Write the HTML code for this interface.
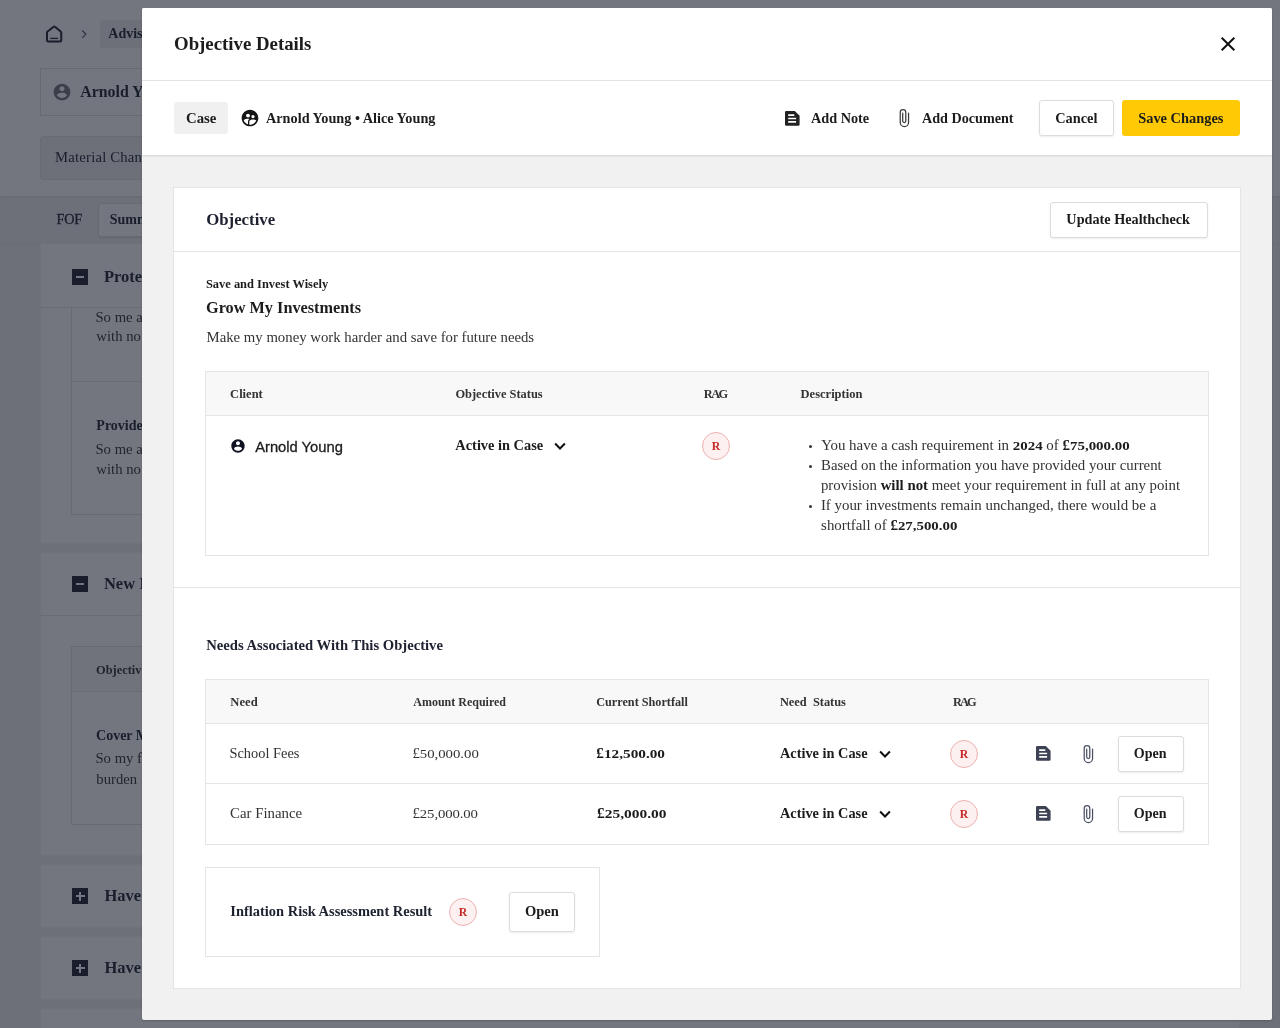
<!DOCTYPE html>
<html>
<head>
<meta charset="utf-8">
<title>Objective Details</title>
<style>
*{box-sizing:border-box;margin:0;padding:0}
html,body{width:1280px;height:1028px;overflow:hidden;background:#fff}
body{position:relative;font-family:"Liberation Serif",serif;color:#1c1c1c;font-size:14px}
.abs{position:absolute}
.t{position:absolute;white-space:nowrap;line-height:20px;height:20px}
.b{font-weight:bold}
.os{display:inline-block;transform:scaleY(0.78);transform-origin:0 75%}
.sans{font-family:"Liberation Sans",sans-serif}

/* ---------- underlying page ---------- */
#page{position:absolute;left:0;top:0;width:1280px;height:1028px;overflow:hidden;color:#1e2230;will-change:transform}
#page .grey{position:absolute;background:#f0f0f0}
#page .card{position:absolute;background:#fff;border:1px solid #f6f6f6}
#page .box{position:absolute;border:1px solid #e2e2e2;background:#fff}
#page .ico{position:absolute;width:16px;height:16px;background:#1e2230}
#page .ico:before{content:"";position:absolute;left:4px;top:7px;width:8px;height:2px;background:#fff}
#page .ico.plus:before{left:3.5px;top:7.25px;width:9px;height:1.5px}
#page .ico.plus:after{content:"";position:absolute;left:7.25px;top:3.5px;width:1.5px;height:9px;background:#fff}
#overlay{position:absolute;left:0;top:0;width:1280px;height:1028px;background:rgba(22,27,42,0.6)}

/* ---------- modal ---------- */
#modal{position:absolute;left:142px;top:8px;width:1130px;height:1012px;background:#f1f1f1;border-radius:2px;box-shadow:0 1px 2px rgba(0,0,0,0.2);overflow:hidden}
.hr{position:absolute;height:1px;background:#e6e6e6}
.btn{position:absolute;background:#fff;border:1px solid #dcdcdc;border-radius:3px;box-shadow:0 1px 2px rgba(0,0,0,0.08)}
.tbl{position:absolute;border:1px solid #e5e5e5;background:#fff}
.rag{position:absolute;width:28px;height:28px;border-radius:50%;background:#fdf0f0;border:1px solid #efb1b1;color:#c62828;font-weight:bold;font-size:13.5px;line-height:26px;text-align:center}
.rag i{display:inline-block;font-style:normal;transform:scaleX(0.87)}
.h12{font-size:12px;font-weight:bold;color:#333}
</style>
</head>
<body>

<div id="page">
  <div class="grey" style="left:100px;top:20px;width:120px;height:28px;border-radius:3px"></div>
  <svg class="abs" style="left:44px;top:23px" width="22" height="22" viewBox="0 0 22 22"><path d="M3 9.6 Q3 8.9 3.6 8.45 L9.6 3.75 Q10.25 3.25 10.9 3.75 L16.65 8.45 Q17.25 8.9 17.25 9.6 V17 Q17.25 18.5 15.75 18.5 H4.5 Q3 18.5 3 17 Z" stroke="#1e2230" stroke-width="2" fill="none" stroke-linejoin="round"/><path d="M6.25 15.4 H14" stroke="#1e2230" stroke-width="1.3" fill="none"/></svg>
  <svg class="abs" style="left:80px;top:29px" width="8" height="10" viewBox="0 0 8 10"><path d="M2.2 1.4 L5.8 5.1 L2.2 8.8" stroke="#4a4e5c" stroke-width="1.2" fill="none"/></svg>
  <span class="t b" id="t_p_advis" style="left:108.32px;top:24.41px">Advisor</span>

  <div class="card" style="left:40px;top:68px;width:1200px;height:48px;border-color:#dedede"></div>
  <svg class="abs" style="left:52.2px;top:82.2px" width="20" height="20" viewBox="0 0 24 24"><path d="M12 2C6.48 2 2 6.48 2 12s4.48 10 10 10 10-4.48 10-10S17.52 2 12 2zm0 3c1.66 0 3 1.34 3 3s-1.34 3-3 3-3-1.34-3-3 1.34-3 3-3zm0 14.2c-2.5 0-4.71-1.28-6-3.22.03-1.99 4-3.08 6-3.08 1.99 0 5.97 1.09 6 3.08-1.29 1.94-3.5 3.22-6 3.22z" fill="#75757b"/></svg>
  <span class="t b" id="t_p_arnold" style="left:80.18px;top:82.3px;font-size:15.9px">Arnold Young</span>

  <div class="grey" style="left:40px;top:136px;width:200px;height:44px;border-radius:3px;border:1px solid #e4e4e4"></div>
  <span class="t" id="t_p_material" style="left:55.1px;top:146.8px;font-size:14.7px;letter-spacing:0.2px">Material Changes</span>

  <div class="grey" style="left:0;top:196px;width:1280px;height:832px;box-shadow:inset 0 2px 3px -1px rgba(0,0,0,0.08)"></div>
  <span class="t" id="t_p_fof" style="left:56.4px;top:208.8px;font-size:14.2px;letter-spacing:-0.1px;-webkit-text-stroke:0.3px #1e2230">FOF</span>
  <div class="box" style="left:98px;top:203px;width:120px;height:34px;border-radius:3px;box-shadow:0 1px 2px rgba(0,0,0,0.12)"></div>
  <span class="t b" id="t_p_summ" style="left:109.7px;top:209.71px">Summary</span>
  <div class="hr" style="left:0;top:244px;width:1280px;background:#e5e5e5"></div>

  <!-- card 1 -->
  <div class="card" style="left:40px;top:244px;width:1200px;height:300px;border-top:none"></div>
  <div class="hr" style="left:41px;top:307px;width:1198px;background:#e6e6e6"></div>
  <div class="ico" style="left:72px;top:269px"></div>
  <span class="t b" id="t_p_prote" style="left:103.94px;top:266.8px;font-size:16.5px">Protection</span>
  <div class="box" style="left:71px;top:300px;width:1138px;height:215px;border-top:none"></div>
  <div class="abs" style="left:60px;top:296px;width:1160px;height:12px;background:#fff"></div>
  <div class="hr" style="left:41px;top:307px;width:1198px;background:#e6e6e6"></div>
  <span class="t" id="t_p_so1" style="left:95.46px;top:306.5px;font-size:14.7px;color:#333">So me and my family</span>
  <span class="t" id="t_p_with1" style="left:96.36px;top:326.21px;font-size:14.7px;color:#333">with no worries</span>
  <div class="hr" style="left:72px;top:381px;width:1136px;background:#e5e5e5"></div>
  <span class="t b" id="t_p_provide" style="left:96.36px;top:415.71px">Provide for</span>
  <span class="t" id="t_p_so2" style="left:95.46px;top:438.71px;font-size:14.7px;color:#333">So me and my family</span>
  <span class="t" id="t_p_with2" style="left:96.36px;top:459px;font-size:14.7px;color:#333">with no worries</span>

  <!-- card 2 -->
  <div class="card" style="left:40px;top:552px;width:1200px;height:304px"></div>
  <div class="hr" style="left:41px;top:615px;width:1198px;background:#e6e6e6"></div>
  <div class="ico" style="left:72px;top:576px"></div>
  <span class="t b" id="t_p_new" style="left:103.94px;top:573.71px;font-size:16.5px">New Investment</span>
  <div class="box" style="left:71px;top:646px;width:1138px;height:179px"></div>
  <div class="abs" style="left:72px;top:647px;width:1136px;height:44px;background:#f8f8f8"></div>
  <div class="hr" style="left:72px;top:691px;width:1136px;background:#e5e5e5"></div>
  <span class="t h12" id="t_p_objectiv" style="left:96.06px;top:659.91px;font-size:12.4px">Objective</span>
  <span class="t b" id="t_p_cover" style="left:96.06px;top:725.5px">Cover My</span>
  <span class="t" id="t_p_somy" style="left:95.46px;top:748.41px;font-size:14.7px;color:#333">So my family</span>
  <span class="t" id="t_p_burden" style="left:96.36px;top:768.8px;font-size:14.7px;color:#333">burden</span>

  <!-- cards 3-5 -->
  <div class="card" style="left:40px;top:864px;width:1200px;height:64px"></div>
  <div class="ico plus" style="left:72px;top:888px"></div>
  <span class="t b" id="t_p_have1" style="left:104.54px;top:885.71px;font-size:16.5px">Have</span>
  <div class="card" style="left:40px;top:936px;width:1200px;height:64px"></div>
  <div class="ico plus" style="left:72px;top:960px"></div>
  <span class="t b" id="t_p_have2" style="left:104.54px;top:958px;font-size:16.5px">Have</span>
  <div class="card" style="left:40px;top:1008px;width:1200px;height:64px"></div>
</div>
<div id="overlay"></div>

<div id="modal">
<div id="mc" style="position:absolute;left:-142px;top:-8px;width:1280px;height:1028px;will-change:transform">
  <!-- header -->
  <div class="abs" style="left:142px;top:8px;width:1130px;height:72px;background:#fff"></div>
  <div class="hr" style="left:142px;top:80px;width:1130px"></div>
  <span class="t b" id="t_title" style="left:174px;top:33.5px;font-size:18.82px">Objective Details</span>
  <svg class="abs" style="left:1220px;top:36px" width="16" height="16" viewBox="0 0 16 16"><path d="M1.7 1.7 L14.3 14.3 M14.3 1.7 L1.7 14.3" stroke="#111" stroke-width="2" fill="none"/></svg>

  <!-- action bar -->
  <div class="abs" style="left:142px;top:81px;width:1130px;height:74px;background:#fff;box-shadow:0 1px 2px rgba(0,0,0,0.13)"></div>
  <div class="abs" style="left:174px;top:102px;width:54px;height:32px;background:#f0f0f0;border-radius:3px"></div>
  <span class="t b" id="t_case" style="left:186.06px;top:107.5px;font-size:14.79px">Case</span>
  <span class="t b" id="t_names" style="left:266px;top:107.5px;font-size:14.25px">Arnold Young &bull; Alice Young</span>
  <span class="t b" id="t_addnote" style="left:811px;top:107.5px;font-size:14.25px">Add Note</span>
  <span class="t b" id="t_adddoc" style="left:922px;top:107.5px;font-size:14.15px">Add Document</span>
  <div class="btn" style="left:1039px;top:100px;width:75px;height:36px"></div>
  <span class="t b" id="t_cancel" style="left:1055.14px;top:107.5px;font-size:14.36px">Cancel</span>
  <div class="abs" style="left:1122px;top:100px;width:118px;height:36px;background:#ffca05;border-radius:3px"></div>
  <span class="t b" id="t_save" style="left:1138.2px;top:107.5px;font-size:14.42px">Save Changes</span>

  <!-- card -->
  <div class="abs" style="left:173px;top:187px;width:1068px;height:802px;background:#fff;border:1px solid #e5e5e5"></div>
  <span class="t b" id="t_objective" style="left:206.17px;top:210px;font-size:16.81px;color:#1e2230">Objective</span>
  <div class="btn" style="left:1050px;top:202px;width:158px;height:36px"></div>
  <span class="t b" id="t_update" style="left:1066.36px;top:209.21px;font-size:14.23px">Update Healthcheck</span>
  <div class="hr" style="left:174px;top:251px;width:1066px"></div>

  <span class="t b" id="t_saveinvest" style="left:205.91px;top:274.11px;font-size:12.45px">Save and Invest Wisely</span>
  <span class="t b" id="t_grow" style="left:206.06px;top:298.11px;font-size:16.26px">Grow My Investments</span>
  <span class="t" id="t_make" style="left:206.52px;top:327.21px;color:#333;font-size:14.77px">Make my money work harder and save for future needs</span>

  <!-- table 1 -->
  <div class="tbl" style="left:205px;top:371px;width:1004px;height:185px"></div>
  <div class="abs" style="left:206px;top:372px;width:1002px;height:43px;background:#f8f8f8"></div>
  <div class="hr" style="left:206px;top:415px;width:1002px;background:#e5e5e5"></div>
  <span class="t h12" id="t_hclient" style="left:230.12px;top:384.21px;font-size:12.5px">Client</span>
  <span class="t h12" id="t_hobjstat" style="left:455.42px;top:384.21px;font-size:12.43px">Objective Status</span>
  <span class="t h12" id="t_hrag1" style="left:703.84px;top:384.21px;font-size:12.4px;letter-spacing:-1.6px">RAG</span>
  <span class="t h12" id="t_hdesc" style="left:800.6px;top:384.21px;font-size:12.51px">Description</span>
  <span class="t sans" id="t_arnold" style="left:255.14px;top:436.5px;font-size:14.75px;-webkit-text-stroke:0.3px #1c1c1c">Arnold Young</span>
  <span class="t b" id="t_active1" style="left:455.36px;top:435px;font-size:14.36px">Active in Case</span>
  <div class="rag" style="left:702px;top:432px"><i>R</i></div>


  <!-- description bullets -->
  <div class="abs" style="left:809px;top:445px;width:3px;height:3px;border-radius:50%;background:#333"></div>
  <div class="abs" style="left:809px;top:465px;width:3px;height:3px;border-radius:50%;background:#333"></div>
  <div class="abs" style="left:809px;top:505px;width:3px;height:3px;border-radius:50%;background:#333"></div>
  <span class="t" id="t_d1" style="left:821.2px;top:435px;color:#333;font-size:14.93px">You have a cash requirement in <b style="color:#1c1c1c"><span class="os">2024</span></b> of <b style="color:#1c1c1c">&pound;<span class="os">75,000.00</span></b></span>
  <span class="t" id="t_d2" style="left:821.12px;top:455px;color:#333;font-size:14.82px">Based on the information you have provided your current</span>
  <span class="t" id="t_d3" style="left:820.9px;top:475px;color:#333;font-size:14.83px">provision <b style="color:#1c1c1c">will not</b> meet your requirement in full at any point</span>
  <span class="t" id="t_d4" style="left:820.9px;top:495px;color:#333;font-size:14.9px">If your investments remain unchanged, there would be a</span>
  <span class="t" id="t_d5" style="left:821.12px;top:515px;color:#333;font-size:14.86px">shortfall of <b style="color:#1c1c1c">&pound;<span class="os">27,500.00</span></b></span>


  <div class="hr" style="left:174px;top:587px;width:1066px"></div>

  <!-- needs -->
  <span class="t b" id="t_needs" style="left:206.24px;top:635.3px;color:#1e2230;font-size:14.65px">Needs Associated With This Objective</span>
  <div class="tbl" style="left:205px;top:679px;width:1004px;height:166px"></div>
  <div class="abs" style="left:206px;top:680px;width:1002px;height:43px;background:#f8f8f8"></div>
  <div class="hr" style="left:206px;top:723px;width:1002px;background:#e5e5e5"></div>
  <div class="hr" style="left:206px;top:783px;width:1002px;background:#e5e5e5"></div>
  <span class="t h12" id="t_hneed" style="left:230.36px;top:692.21px;font-size:12.61px">Need</span>
  <span class="t h12" id="t_hamount" style="left:413.34px;top:692.21px;font-size:11.99px">Amount Required</span>
  <span class="t h12" id="t_hshort" style="left:596.24px;top:692.21px;font-size:12.21px">Current Shortfall</span>
  <span class="t h12" id="t_hnstat" style="left:779.9px;top:692.21px;font-size:12.38px">Need&nbsp; Status</span>
  <span class="t h12" id="t_hrag2" style="left:952.9px;top:692.21px;font-size:12.4px;letter-spacing:-1.85px">RAG</span>

  <span class="t" id="t_school" style="left:229.46px;top:743px;color:#333;font-size:14.4px">School Fees</span>
  <span class="t" id="t_amt1" style="left:412.38px;top:743px;color:#333;font-size:14.78px">&pound;<span class="os">50,000.00</span></span>
  <span class="t b" id="t_sf1" style="left:596.33px;top:743px;font-size:15.25px">&pound;<span class="os">12,500.00</span></span>
  <span class="t b" id="t_active2" style="left:780px;top:743px;font-size:14.33px">Active in Case</span>
  <div class="rag" style="left:950px;top:740px"><i>R</i></div>
  <div class="btn" style="left:1118px;top:736px;width:66px;height:36px"></div>
  <span class="t b" id="t_open1" style="left:1133.72px;top:743px;font-size:14.04px">Open</span>

  <span class="t" id="t_car" style="left:230.06px;top:803px;color:#333;font-size:14.83px">Car Finance</span>
  <span class="t" id="t_amt2" style="left:412.6px;top:803px;color:#333;font-size:14.78px;letter-spacing:-0.12px">&pound;<span class="os">25,000.00</span></span>
  <span class="t b" id="t_sf2" style="left:597.04px;top:803px;font-size:15.44px">&pound;<span class="os">25,000.00</span></span>
  <span class="t b" id="t_active3" style="left:780px;top:803px;font-size:14.33px">Active in Case</span>
  <div class="rag" style="left:950px;top:800px"><i>R</i></div>
  <div class="btn" style="left:1118px;top:796px;width:66px;height:36px"></div>
  <span class="t b" id="t_open2" style="left:1133.72px;top:803px;font-size:14.04px">Open</span>

  <!-- inflation -->
  <div class="tbl" style="left:205px;top:867px;width:395px;height:90px"></div>
  <span class="t b" id="t_infl" style="left:230.36px;top:900.5px;color:#1e2230;font-size:14.44px">Inflation Risk Assessment Result</span>
  <div class="rag" style="left:449px;top:898px"><i>R</i></div>
  <div class="btn" style="left:509px;top:892px;width:66px;height:40px"></div>
  <span class="t b" id="t_open3" style="left:524.94px;top:901px;font-size:14.54px">Open</span>
  <!-- icons -->
  <svg class="abs" style="left:240.2px;top:108.3px" width="20" height="20" viewBox="0 0 24 24"><path d="M11.99 2c-5.52 0-10 4.48-10 10s4.48 10 10 10 10-4.48 10-10-4.48-10-10-10zm3.61 6.34c1.07 0 1.93.86 1.93 1.93 0 1.07-.86 1.93-1.93 1.93-1.07 0-1.93-.86-1.93-1.93-.01-1.07.86-1.93 1.93-1.93zm-6-1.58c1.3 0 2.36 1.06 2.36 2.36 0 1.3-1.06 2.36-2.36 2.36s-2.36-1.06-2.36-2.36c0-1.31 1.05-2.36 2.36-2.36zm0 9.13v3.75c-2.4-.75-4.3-2.6-5.14-4.96 1.05-1.12 3.67-1.69 5.14-1.69.53 0 1.2.08 1.9.22-1.64.87-1.9 2.02-1.9 2.68zM11.99 20c-.27 0-.53-.01-.79-.04v-4.07c0-1.42 2.94-2.13 4.4-2.13 1.07 0 2.92.39 3.84 1.15-1.17 2.97-4.06 5.09-7.45 5.09z" fill="#161616"/></svg>
  <svg class="abs" style="left:785.3px;top:110.6px" width="15" height="15" viewBox="0 0 15 15"><path d="M1.2 0 H9.8 L14.6 4.8 V13.6 A1.2 1.2 0 0 1 13.4 14.8 H1.2 A1.2 1.2 0 0 1 0 13.6 V1.2 A1.2 1.2 0 0 1 1.2 0 Z M3.2 3.3 H9.3 V5 H3.2 Z M3.2 6.7 H11.1 V8.3 H3.2 Z M3.2 10.1 H11.1 V11.7 H3.2 Z" fill="#222" fill-rule="evenodd"/></svg>
  <svg class="abs" style="left:889px;top:103px" width="30" height="30" viewBox="0 0 30 30"><path d="M19.55 10.1 V19.45 A4.16 4.16 0 0 1 11.23 19.45 V9.37 A2.77 2.77 0 0 1 16.78 9.37 V17.97 A1.54 1.54 0 0 1 13.7 17.97 V10.1" stroke="#3a3a3a" stroke-width="1.25" stroke-linecap="round" fill="none"/></svg>
  <svg class="abs" style="left:230.25px;top:438px" width="16" height="16" viewBox="0 0 24 24"><path d="M12 2C6.48 2 2 6.48 2 12s4.48 10 10 10 10-4.48 10-10S17.52 2 12 2zm0 3c1.66 0 3 1.34 3 3s-1.34 3-3 3-3-1.34-3-3 1.34-3 3-3zm0 14.2c-2.5 0-4.71-1.28-6-3.22.03-1.99 4-3.08 6-3.08 1.99 0 5.97 1.09 6 3.08-1.29 1.94-3.5 3.22-6 3.22z" fill="#0f1322"/></svg>
  <svg class="abs" style="left:1036.4px;top:746.3px" width="15" height="15" viewBox="0 0 15 15"><path d="M1.2 0 H9.8 L14.6 4.8 V13.6 A1.2 1.2 0 0 1 13.4 14.8 H1.2 A1.2 1.2 0 0 1 0 13.6 V1.2 A1.2 1.2 0 0 1 1.2 0 Z M3.2 3.3 H9.3 V5 H3.2 Z M3.2 6.7 H11.1 V8.3 H3.2 Z M3.2 10.1 H11.1 V11.7 H3.2 Z" fill="#3d4254" fill-rule="evenodd"/></svg>
  <svg class="abs" style="left:1072.6px;top:738.5px" width="30" height="30" viewBox="0 0 30 30"><path d="M19.55 10.1 V19.45 A4.16 4.16 0 0 1 11.23 19.45 V9.37 A2.77 2.77 0 0 1 16.78 9.37 V17.97 A1.54 1.54 0 0 1 13.7 17.97 V10.1" stroke="#4a5064" stroke-width="1.25" stroke-linecap="round" fill="none"/></svg>
  <svg class="abs" style="left:1036.4px;top:806.3px" width="15" height="15" viewBox="0 0 15 15"><path d="M1.2 0 H9.8 L14.6 4.8 V13.6 A1.2 1.2 0 0 1 13.4 14.8 H1.2 A1.2 1.2 0 0 1 0 13.6 V1.2 A1.2 1.2 0 0 1 1.2 0 Z M3.2 3.3 H9.3 V5 H3.2 Z M3.2 6.7 H11.1 V8.3 H3.2 Z M3.2 10.1 H11.1 V11.7 H3.2 Z" fill="#3d4254" fill-rule="evenodd"/></svg>
  <svg class="abs" style="left:1072.6px;top:798.5px" width="30" height="30" viewBox="0 0 30 30"><path d="M19.55 10.1 V19.45 A4.16 4.16 0 0 1 11.23 19.45 V9.37 A2.77 2.77 0 0 1 16.78 9.37 V17.97 A1.54 1.54 0 0 1 13.7 17.97 V10.1" stroke="#4a5064" stroke-width="1.25" stroke-linecap="round" fill="none"/></svg>
  <!-- chevrons -->
  <svg class="abs chev" style="left:554px;top:442px" width="13" height="9" viewBox="0 0 13 9"><path d="M1.1 1.5 L6 6.5 L10.9 1.5" stroke="#111" stroke-width="2" fill="none"/></svg>
  <svg class="abs chev" style="left:879px;top:750px" width="13" height="9" viewBox="0 0 13 9"><path d="M1.1 1.5 L6 6.5 L10.9 1.5" stroke="#111" stroke-width="2" fill="none"/></svg>
  <svg class="abs chev" style="left:879px;top:810px" width="13" height="9" viewBox="0 0 13 9"><path d="M1.1 1.5 L6 6.5 L10.9 1.5" stroke="#111" stroke-width="2" fill="none"/></svg>
</div>
</div>

</body>
</html>
